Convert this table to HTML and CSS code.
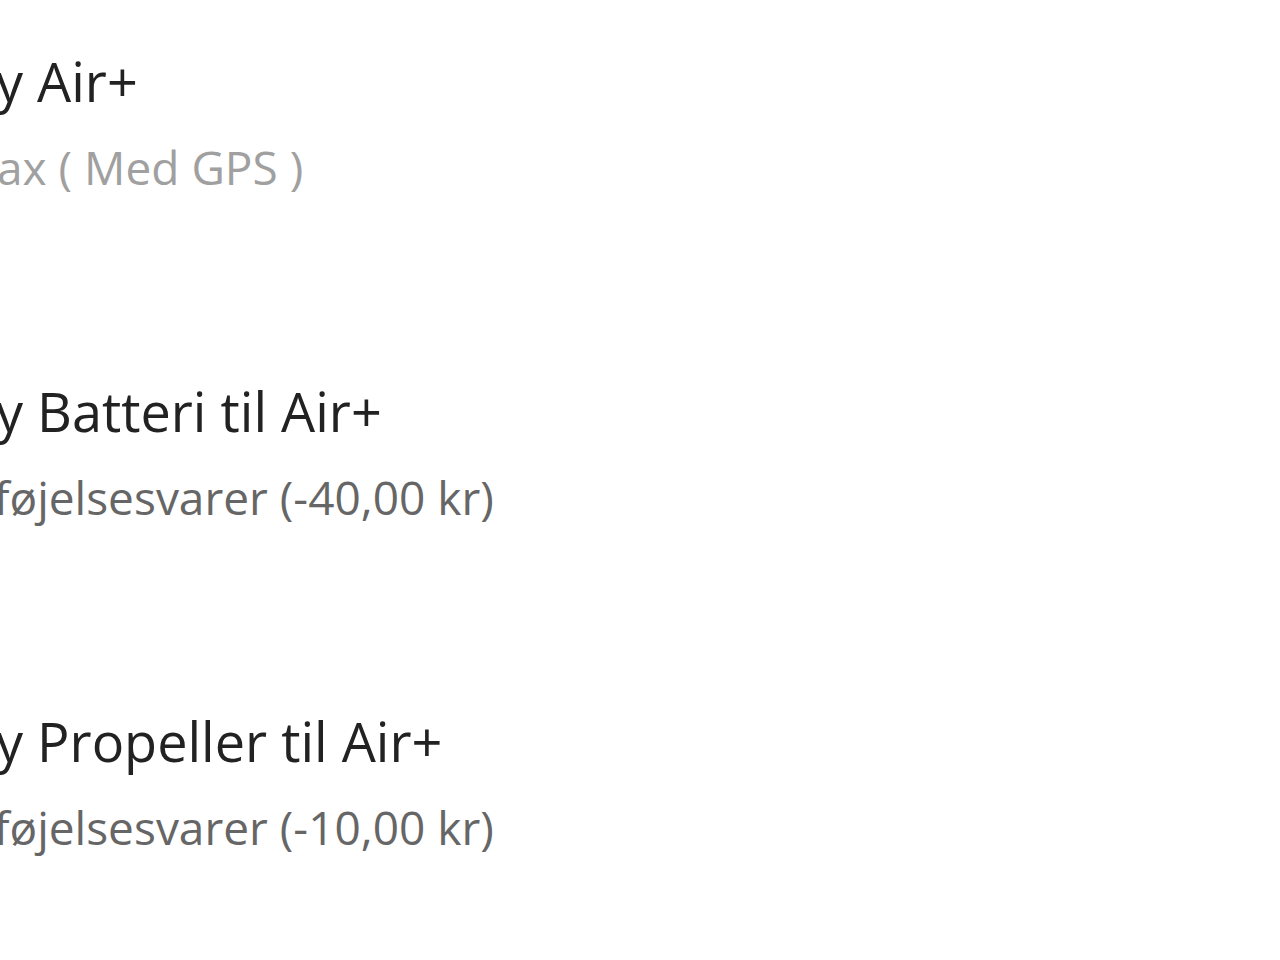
FILE: index.html
```html
<!DOCTYPE html>
<html>
<head><link rel="stylesheet" href="styles.css"></head>
<body>
<div class="list">
  <div class="item">
    <div class="title">y Air+</div>
    <div class="sub light">ax ( Med GPS )</div>
  </div>
  <div class="item">
    <div class="title">y Batteri til Air+</div>
    <div class="sub">føjelsesvarer (-40,00 kr)</div>
  </div>
  <div class="item">
    <div class="title">y Propeller til Air+</div>
    <div class="sub">føjelsesvarer (-10,00 kr)</div>
  </div>
</div>
</body>
</html>
```
FILE: styles.css
```css
html, body { margin: 0; padding: 0; background: #fff; }
body { width: 1280px; height: 960px; overflow: hidden; font-family: "Open Sans", "Noto Sans", sans-serif; }
.list { display: flex; flex-direction: column; gap: 158px; padding-top: 38px; }
.item { display: flex; flex-direction: column; }
.title { font-size: 54px; line-height: 86px; color: #222; white-space: nowrap; margin-left: -4px; }
.sub { font-size: 46px; line-height: 86px; color: #666; white-space: nowrap; margin-left: -6px; }
.sub.light { color: #a0a0a0; margin-left: -3px; }
```
